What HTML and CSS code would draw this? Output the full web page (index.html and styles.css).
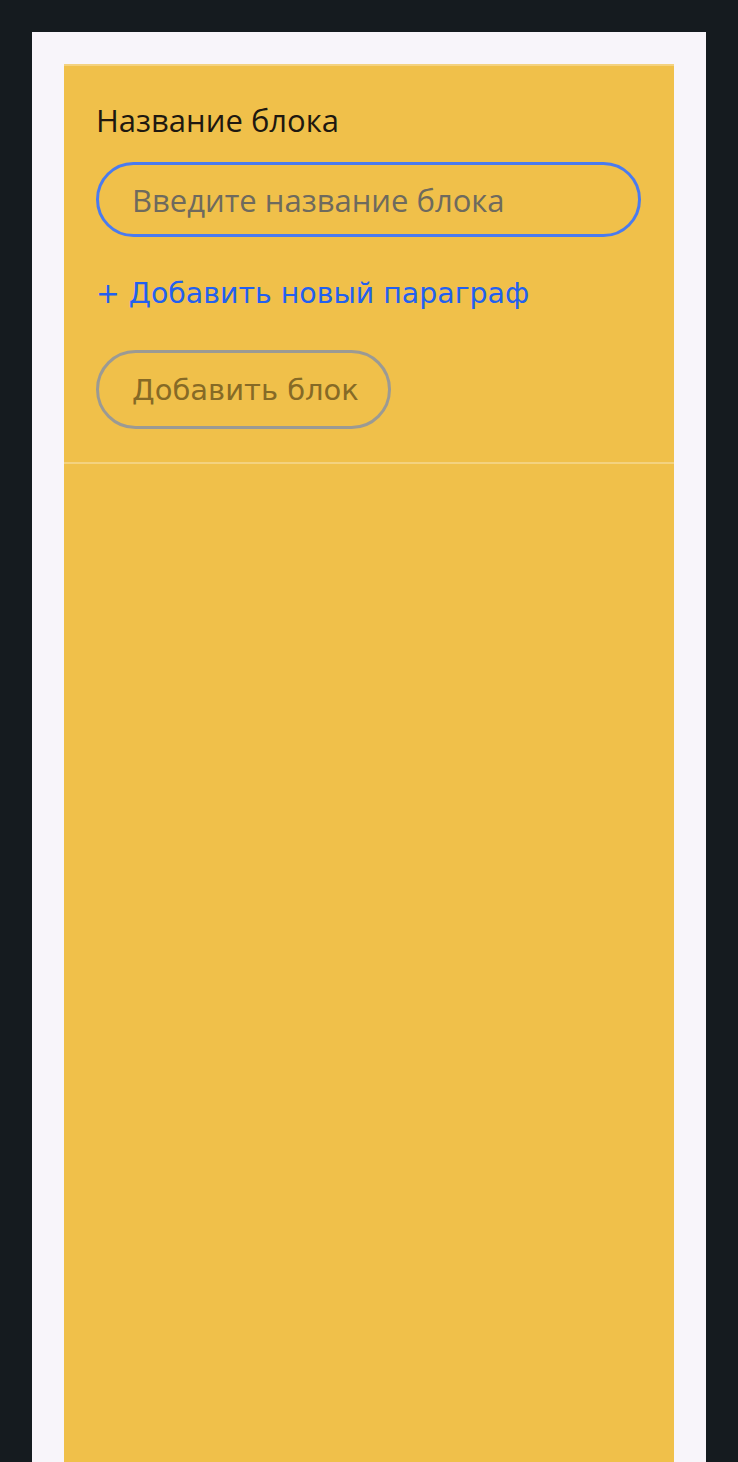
FILE: index.html
```html
<!DOCTYPE html>
<html lang="ru">
<head>
<meta charset="utf-8">
<link rel="stylesheet" href="styles.css">
</head>
<body>
<div class="page">
  <div class="card">
    <div class="form">
      <div class="label">Название блока</div>
      <div class="input"><span class="placeholder">Введите название блока</span></div>
      <a class="add-link">+ Добавить новый параграф</a>
      <div class="actions"><button class="btn">Добавить блок</button></div>
    </div>
    <div class="divider"></div>
    <div class="rest"></div>
  </div>
</div>
</body>
</html>
```

FILE: styles.css
```css
html, body {
  margin: 0;
  padding: 0;
  background: #151b1f;
  height: 100%;
}
body {
  padding: 32px 32px 0 32px;
  box-sizing: border-box;
  overflow: hidden;
}
.page {
  background: #f8f5fa;
  padding: 32px 32px 0 32px;
  min-height: 1430px;
  box-sizing: border-box;
}
.card {
  background: #f0c04a;
  border-top: 2px solid #f4d27f;
  min-height: 1398px;
}
.form {
  padding: 34px 32px 33px 32px;
  display: flex;
  flex-direction: column;
  align-items: flex-start;
}
.label {
  font-family: "Open Sans", "Noto Sans", sans-serif;
  font-size: 31px;
  color: #1e1810;
  line-height: 40px;
}
.input {
  margin-top: 22px;
  width: 545px;
  height: 75px;
  box-sizing: border-box;
  border: 3px solid #4a7bef;
  border-radius: 38px;
  padding-left: 33px;
  display: flex;
  align-items: center;
}
.placeholder {
  font-family: "Open Sans", "Noto Sans", sans-serif;
  font-size: 31px;
  color: #6e6a5e;
  line-height: 40px;
}
.add-link {
  margin-top: 37px;
  font-family: "DejaVu Sans", sans-serif;
  font-size: 28.4px;
  color: #2260f0;
  line-height: 40px;
}
.actions {
  margin-top: 36px;
  display: flex;
}
.btn {
  width: 295px;
  height: 79px;
  box-sizing: border-box;
  border: 3px solid #9b9a94;
  border-radius: 40px;
  background: transparent;
  font-family: "DejaVu Sans", sans-serif;
  font-size: 29px;
  color: #866a26;
  padding: 0 0 0 33px;
  text-align: left;
}
.divider {
  height: 2px;
  background: #f4d27f;
}
```
